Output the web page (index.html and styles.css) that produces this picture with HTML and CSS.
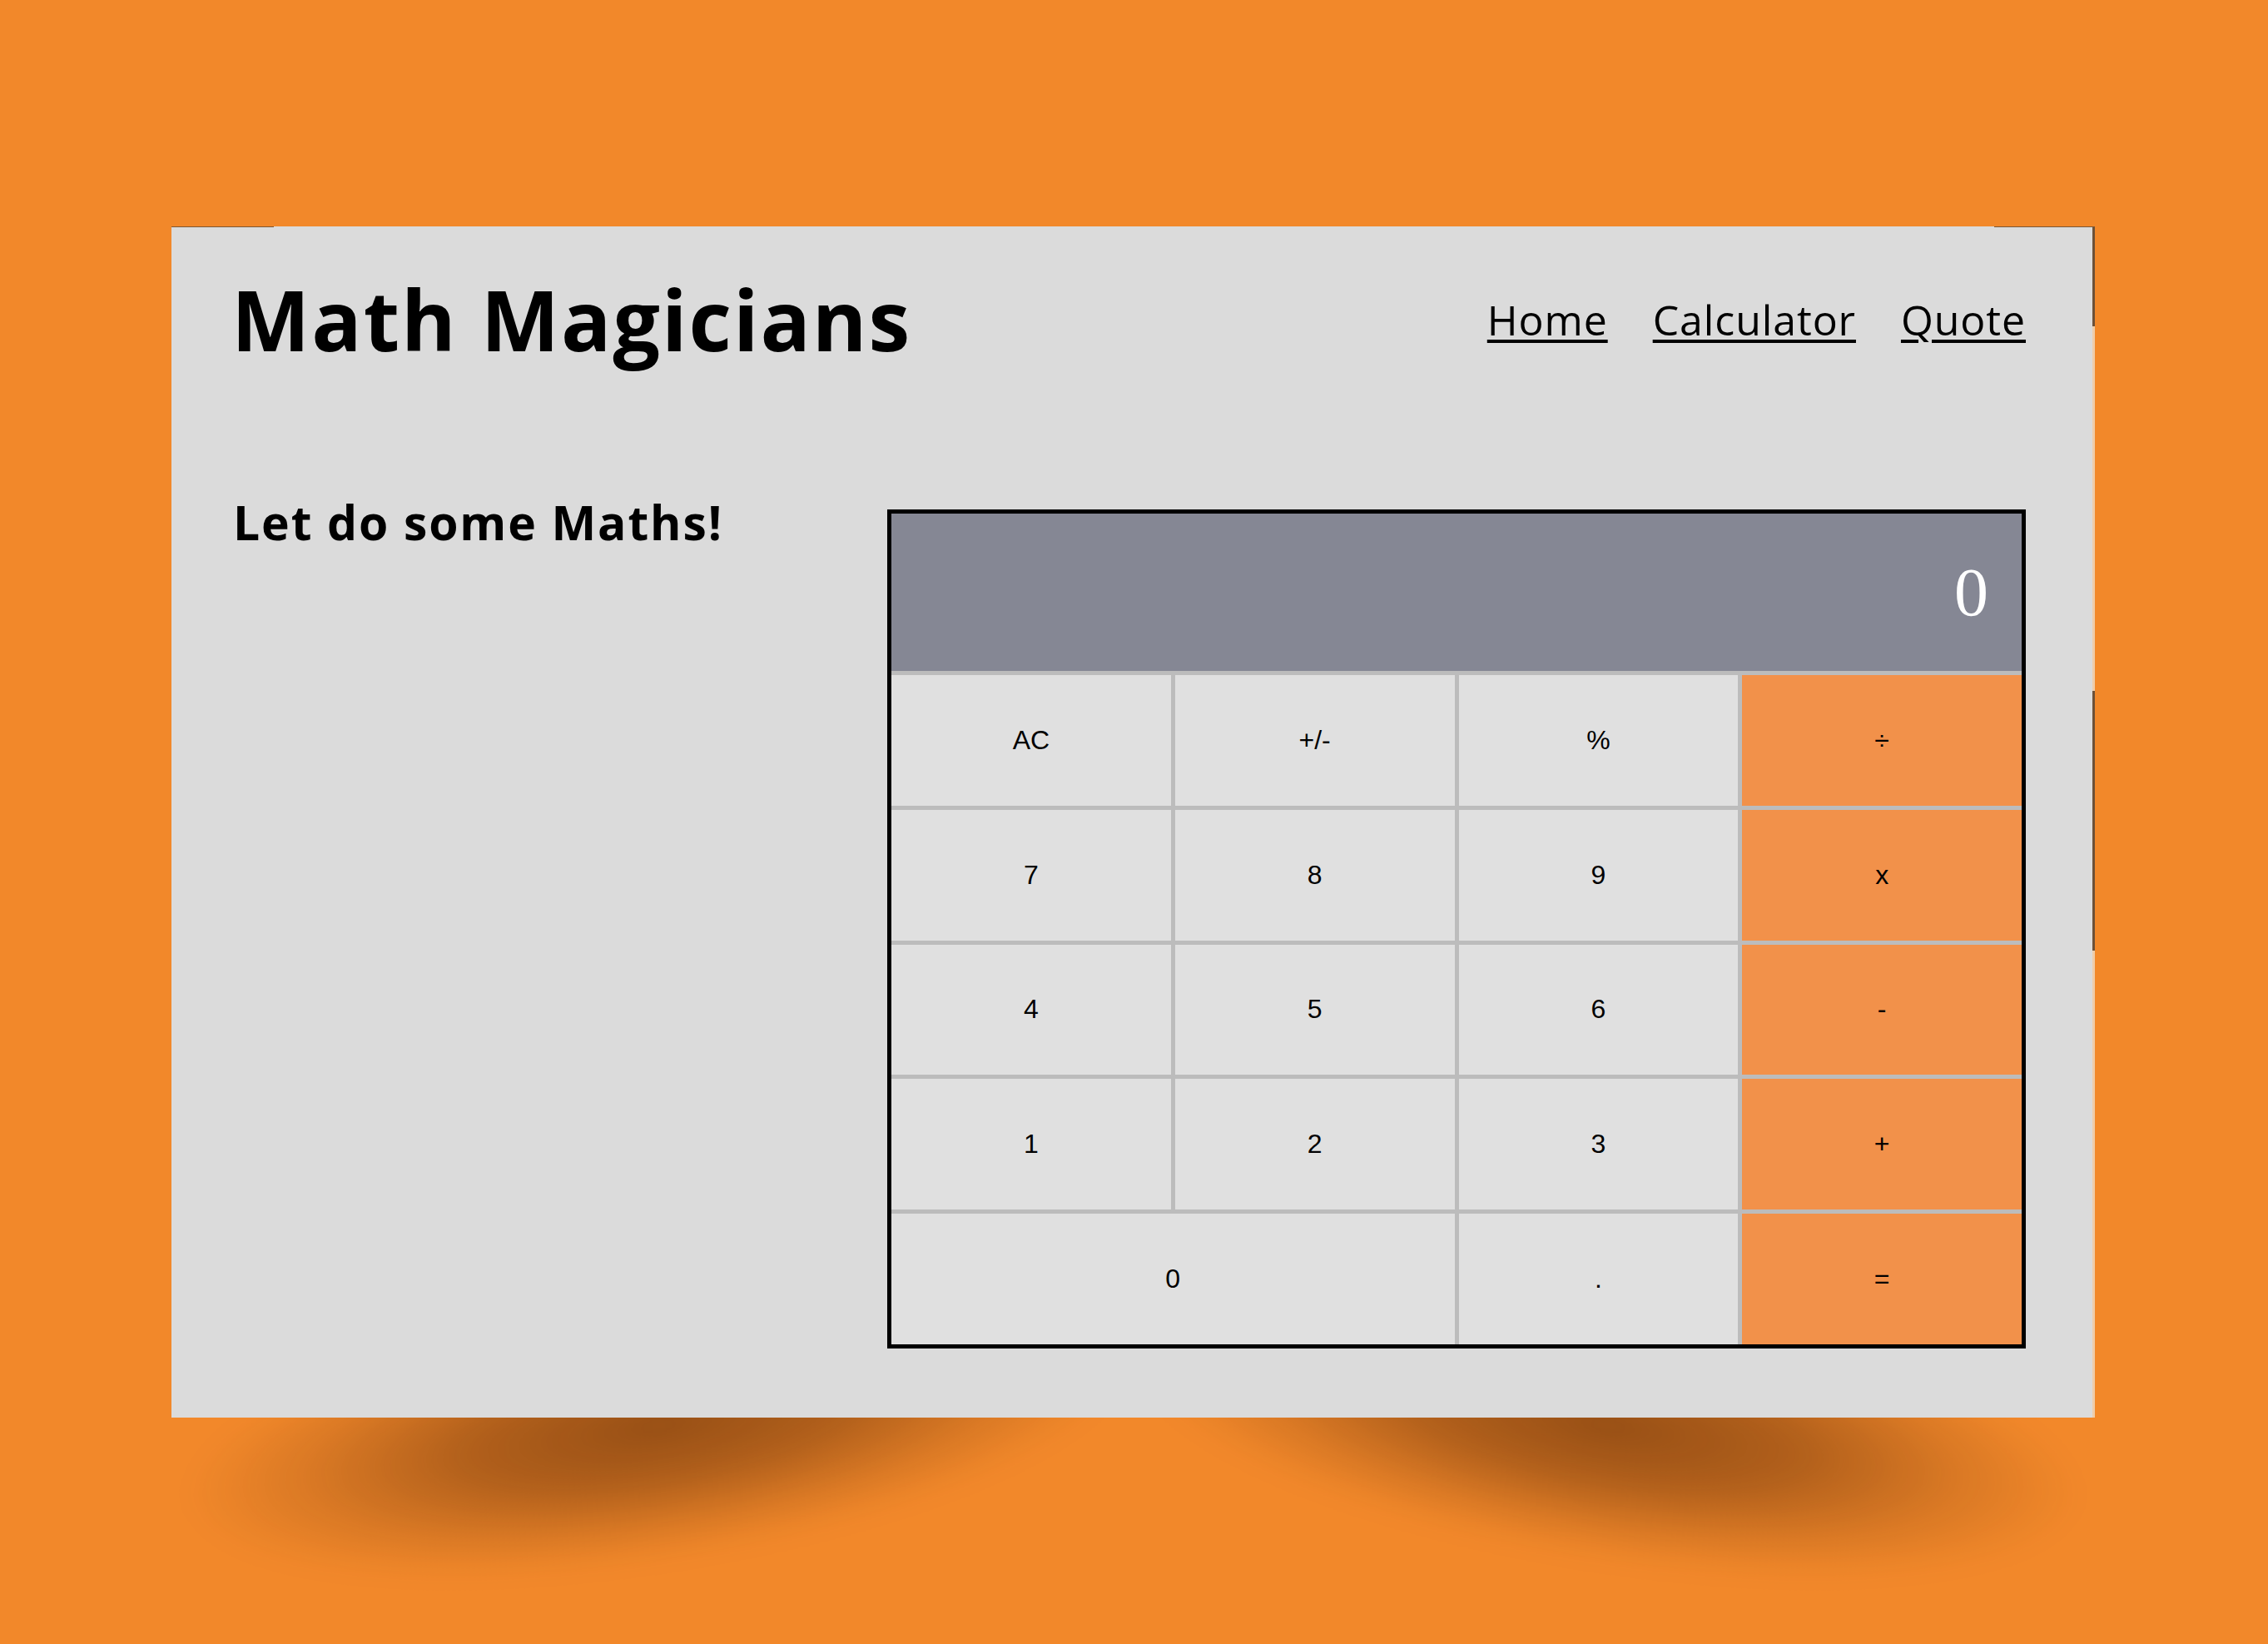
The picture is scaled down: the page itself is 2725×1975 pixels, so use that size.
FILE: index.html
```html
<!DOCTYPE html>
<html lang="en">
<head>
<meta charset="utf-8">
<title>Math Magicians</title>
<link rel="stylesheet" href="styles.css">
</head>
<body>
<div class="page">
  <div class="card">
    <header class="header">
      <h1 class="logo">Math Magicians</h1>
      <nav class="nav">
        <a href="#" class="nav-link">Home</a>
        <a href="#" class="nav-link">Calculator</a>
        <a href="#" class="nav-link">Quote</a>
      </nav>
    </header>
    <main class="content">
      <h2 class="intro">Let do some Maths!</h2>
      <div class="calculator">
        <div class="display">0</div>
        <button class="key">AC</button>
        <button class="key">+/-</button>
        <button class="key">%</button>
        <button class="key key-op">÷</button>
        <button class="key">7</button>
        <button class="key">8</button>
        <button class="key">9</button>
        <button class="key key-op">x</button>
        <button class="key">4</button>
        <button class="key">5</button>
        <button class="key">6</button>
        <button class="key key-op">-</button>
        <button class="key">1</button>
        <button class="key">2</button>
        <button class="key">3</button>
        <button class="key key-op">+</button>
        <button class="key key-zero">0</button>
        <button class="key">.</button>
        <button class="key key-op">=</button>
      </div>
    </main>
  </div>
</div>
</body>
</html>
```

FILE: styles.css
```css
html, body {
  margin: 0;
  padding: 0;
}

body {
  background: #f2882a;
  min-height: 1975px;
  font-family: "Open Sans", "Noto Sans", sans-serif;
  color: #000;
}

.page {
  padding-top: 272px;
}

.card {
  position: relative;
  box-sizing: border-box;
  width: 2311px;
  height: 1431px;
  margin-left: 206px;
  padding: 50px 83px 83px 72px;
  display: flex;
  flex-direction: column;
  background:
    linear-gradient(to right, #7d5632 0 123px, transparent 123px calc(100% - 121px), #7a5636 calc(100% - 121px)) top left / 100% 1px no-repeat,
    linear-gradient(to bottom, #6d5138 0 120px, #efcdaa 120px 558px, #6d5138 558px 870px, #efcdaa 870px) top right / 3px 100% no-repeat,
    #dbdbdb;
}

.card::before,
.card::after {
  content: "";
  position: absolute;
  z-index: -1;
  top: calc(100% - 150px);
  width: 1150px;
  height: 320px;
  background: radial-gradient(ellipse closest-side, rgba(60, 22, 0, 0.5) 0%, rgba(60, 22, 0, 0.36) 40%, rgba(60, 22, 0, 0.13) 75%, rgba(60, 22, 0, 0) 100%);
  filter: blur(14px);
}

.card::before {
  left: 10px;
  transform: rotate(-9deg);
}

.card::after {
  right: 10px;
  transform: rotate(9deg);
}

.header {
  display: flex;
  justify-content: space-between;
  align-items: center;
  height: 121px;
}

.logo {
  margin: 0;
  font-size: 100px;
  line-height: 1.2;
  font-weight: 700;
  letter-spacing: 2px;
}

.nav {
  display: flex;
  gap: 54px;
  padding-top: 2px;
}

.nav-link {
  font-size: 50px;
  line-height: 1.2;
  color: #000;
  letter-spacing: 0.9px;
  text-decoration: underline;
  text-decoration-thickness: 4px;
  text-underline-offset: 5px;
}

.content {
  display: flex;
  justify-content: space-between;
  align-items: flex-start;
  margin-top: 169px;
}

.intro {
  margin: -13px 0 0 2px;
  font-size: 57px;
  line-height: 1;
  font-weight: 700;
  letter-spacing: 1.9px;
}

.calculator {
  box-sizing: border-box;
  width: 1368px;
  height: 1008px;
  border: 5px solid #000;
  background: #bcbcbc;
  display: grid;
  grid-template-columns: repeat(4, 1fr);
  grid-template-rows: 189px repeat(5, 1fr);
  gap: 5px;
}

.display {
  grid-column: 1 / -1;
  background: #858794;
  color: #fff;
  font-family: "Liberation Serif", "Times New Roman", serif;
  font-size: 82px;
  display: flex;
  align-items: center;
  justify-content: flex-end;
  padding-right: 40px;
}

.key {
  border: 0;
  margin: 0;
  padding: 0;
  background: #e0e0e0;
  color: #000;
  font-family: "Liberation Sans", Arial, sans-serif;
  font-size: 32px;
}

.key-op {
  background: #f2914a;
}

.key-zero {
  grid-column: span 2;
}
```
